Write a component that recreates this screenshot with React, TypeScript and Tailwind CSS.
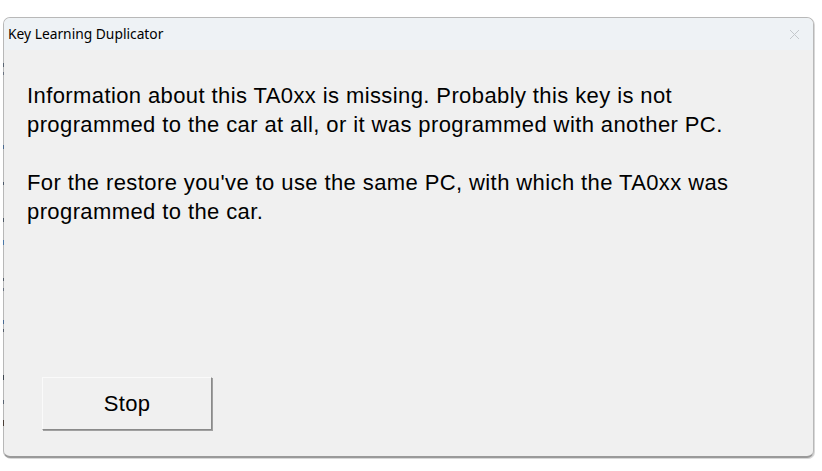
const edgeMarks: { y: number; h: number; c: string }[] = [
  { y: 63, h: 4, c: "#5a6472" },
  { y: 72, h: 3, c: "#6a7280" },
  { y: 145, h: 4, c: "#4c6a90" },
  { y: 182, h: 3, c: "#4c5868" },
  { y: 218, h: 4, c: "#505a66" },
  { y: 240, h: 5, c: "#4a78a8" },
  { y: 278, h: 3, c: "#555d68" },
  { y: 288, h: 3, c: "#6a7280" },
  { y: 320, h: 4, c: "#4a6a92" },
  { y: 329, h: 3, c: "#58606c" },
  { y: 375, h: 5, c: "#3e4650" },
  { y: 400, h: 4, c: "#5a6472" },
  { y: 420, h: 6, c: "#4a3e36" },
];

export default function App() {
  return (
    <div className="w-[822px] h-[471px] bg-white relative overflow-hidden">
      <div className="absolute left-[3px] top-[17px] w-[811px] h-[441px] flex flex-col rounded-[7px] border border-[#b8b8b8] border-b-[#9a9a9a] border-b-2 bg-[#f0f0f0] overflow-hidden shadow-[1px_1px_0_#d8d8d8]">
        {/* title bar */}
        <div className="h-[32px] shrink-0 bg-[#eef2f5] flex items-center justify-between pl-[4px] pr-[13px]">
          <span className="text-[13.8px] text-black pt-[1px]" style={{ fontFamily: '"Noto Sans", "Open Sans", sans-serif' }}>
            Key Learning Duplicator
          </span>
          <svg width="11" height="11" viewBox="0 0 11 11" className="mt-[1px]">
            <path d="M1 1 L10 10 M10 1 L1 10" stroke="#c4c8cc" strokeWidth="1" />
          </svg>
        </div>
        {/* message body */}
        <div
          className="flex-1 flex flex-col pl-[23px] pt-[31px] pb-[26px] text-black text-[22px] leading-[29px] tracking-[0.4px]"
          style={{ fontFamily: '"Liberation Sans", Arial, sans-serif' }}
        >
          <div className="flex-1">
            <p>
              Information about this TA0xx is missing. Probably this key is not
              <br />
              programmed to the car at all, or it was programmed with another PC.
            </p>
            <p className="mt-[29px]">
              For the restore you've to use the same PC, with which the TA0xx was
              <br />
              programmed to the car.
            </p>
          </div>
          <div className="ml-[15px]">
            <button className="w-[170px] h-[53px] bg-[#f0f0f0] border border-t-[#fafafa] border-l-[#fafafa] border-r-[#8a8a8a] border-b-[#8a8a8a] shadow-[1px_1px_0_#a0a0a0] flex items-center justify-center text-[22px] tracking-[0.3px] text-black">
              Stop
            </button>
          </div>
        </div>
      </div>
      {/* bits of a window behind the dialog showing along its left border */}
      {edgeMarks.map((m, i) => (
        <div
          key={i}
          className="absolute left-[3px] w-[1px]"
          style={{ top: m.y, height: m.h, background: m.c }}
        />
      ))}
    </div>
  );
}
